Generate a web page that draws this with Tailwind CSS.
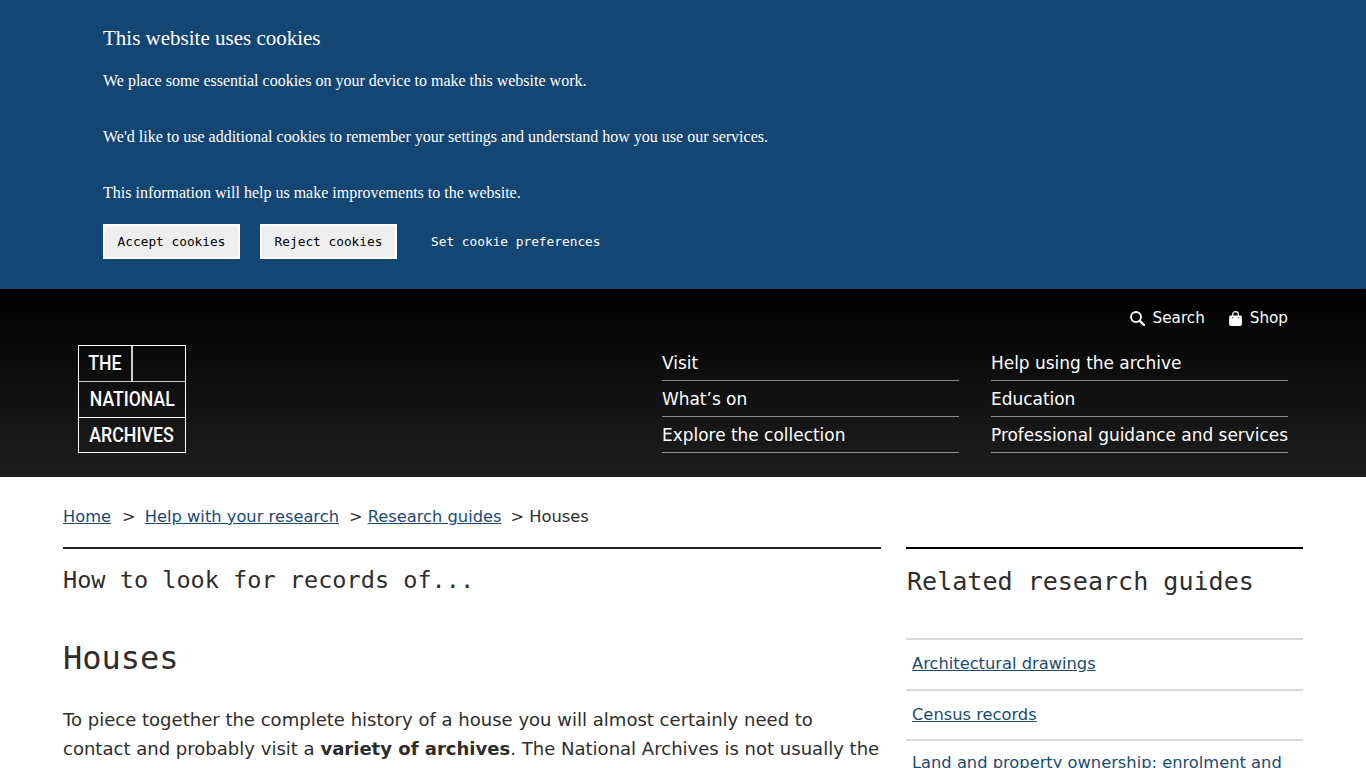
<!DOCTYPE html>
<html lang="en">
<head>
    <meta charset="UTF-8">
    <title>Houses - The National Archives</title>
    <script src="https://cdn.jsdelivr.net/npm/@tailwindcss/browser@4"></script>
</head>
<body class="h-[768px] overflow-hidden bg-white font-['DejaVu_Sans',sans-serif] text-[#2e2d2c]">

    <!-- Cookie banner -->
    <section class="h-[289px] bg-[#144673] pl-[103px] pt-[25px] text-white font-['Liberation_Serif',serif]">
        <h2 class="text-[21px] leading-[26px]">This website uses cookies</h2>
        <p class="mt-[18px] text-[16px] leading-[24px]">We place some essential cookies on your device to make this website work.</p>
        <p class="mt-[32px] text-[16px] leading-[24px]">We'd like to use additional cookies to remember your settings and understand how you use our services.</p>
        <p class="mt-[32px] text-[16px] leading-[24px]">This information will help us make improvements to the website.</p>
        <div class="mt-[19px] flex items-center font-['DejaVu_Sans_Mono',monospace] text-[12.8px]">
            <button class="h-[35px] w-[137px] border-2 border-white bg-[#eeeeee] text-black">Accept cookies</button>
            <button class="ml-[20px] h-[35px] w-[137px] border-2 border-white bg-[#eeeeee] text-black">Reject cookies</button>
            <a href="#" class="ml-[34px] text-white">Set cookie preferences</a>
        </div>
    </section>

    <!-- Header -->
    <header class="relative h-[188px] bg-linear-to-b/srgb from-black to-[#1e1e1e] text-white">
        <div class="flex justify-end gap-[24px] pr-[78px] pt-[19px] text-[15.2px] leading-[20px]">
            <a href="#" class="flex items-center gap-[8px]">
                <svg width="15" height="15" viewBox="0 0 15 15" fill="none" stroke="white"><circle cx="6" cy="6" r="5" stroke-width="1.8"/><path d="M9.8 9.8L14 14" stroke-width="2.4" stroke-linecap="round"/></svg>
                Search
            </a>
            <a href="#" class="flex items-center gap-[8px]">
                <svg width="13" height="15" viewBox="0 0 13 15"><path fill-rule="evenodd" d="M1.5 4.5H11.5Q12.6 4.5 12.7 5.6L13 12.8A2.2 2.2 0 0 1 10.8 15H2.2A2.2 2.2 0 0 1 0 12.8L0.3 5.6Q0.4 4.5 1.5 4.5ZM3.2 6.2V7.2H4.2V6.2ZM8.8 6.2V7.2H9.8V6.2Z" fill="white"/><path d="M3.7 5V3.2A2.8 2.6 0 0 1 9.3 3.2V5" fill="none" stroke="white" stroke-width="1.2"/></svg>
                Shop
            </a>
        </div>
        <div class="mt-[17px] flex pl-[78px]">
            <!-- Logo -->
            <a href="#" class="grid h-[108px] w-[108px] grid-cols-[54px_1fr] grid-rows-[36px_36px_1fr] border border-white text-[20px] font-medium font-['Roboto',sans-serif] leading-none">
                <span class="flex items-center justify-center border-r-2 border-b border-white/80 pb-[1px]"><span class="scale-x-[.88]">THE</span></span>
                <span class="border-b border-white/80"></span>
                <span class="col-span-2 flex items-center justify-center border-b border-white pb-[1px]"><span class="scale-x-[.88]">NATIONAL</span></span>
                <span class="col-span-2 flex items-center justify-center"><span class="scale-x-[.89]">ARCHIVES</span></span>
            </a>
            <nav class="ml-[476px] grid w-[626px] grid-cols-2 gap-x-[32px] text-[16.95px] leading-[24px]">
                <a href="#" class="h-[36px] border-b border-white/50 pt-[6px]">Visit</a>
                <a href="#" class="h-[36px] border-b border-white/50 pt-[6px]">Help using the archive</a>
                <a href="#" class="h-[36px] border-b border-white/50 pt-[6px]">What’s on</a>
                <a href="#" class="h-[36px] border-b border-white/50 pt-[6px]">Education</a>
                <a href="#" class="h-[36px] border-b border-white/50 pt-[6px]">Explore the collection</a>
                <a href="#" class="h-[36px] border-b border-white/50 pt-[6px] whitespace-nowrap">Professional guidance and services</a>
            </nav>
        </div>
    </header>

    <!-- Breadcrumb -->
    <div class="flex pl-[63px] pt-[28px] text-[16.3px] leading-[24px]">
        <a href="#" class="text-[#1b4b72] underline">Home</a>
        <span class="ml-[11px] mr-[9px]">&gt;</span>
        <a href="#" class="text-[#1b4b72] underline">Help with your research</a>
        <span class="ml-[10px] mr-[5px]">&gt;</span>
        <a href="#" class="text-[#1b4b72] underline">Research guides</a>
        <span class="ml-[9px] mr-[5px]">&gt;</span>
        <span>Houses</span>
    </div>

    <main class="mt-[18px] flex gap-[25px] px-[63px]">
        <article class="w-[818px] border-t-2 border-[#222222]">
            <p class="mt-[15px] font-['DejaVu_Sans_Mono',monospace] text-[23.55px] leading-[32px]">How to look for records of...</p>
            <h1 class="mt-[42px] font-['DejaVu_Sans_Mono',monospace] text-[32px] leading-[40px]">Houses</h1>
            <p class="mt-[27px] text-[18.05px] leading-[29px]">To piece together the complete history of a house you will almost certainly need to contact and probably visit a <strong>variety of archives</strong>. The National Archives is not usually the</p>
        </article>
        <aside class="w-[397px] border-t-2 border-black">
            <h2 class="mt-[15px] pl-px font-['DejaVu_Sans_Mono',monospace] text-[25.05px] leading-[36px]">Related research guides</h2>
            <ul class="mt-[38px] text-[16.3px] leading-[24px]">
                <li class="border-t-2 border-[#d9d9d9] pl-[6px] pt-[12px] pb-[13px]"><a href="#" class="text-[#1b4b72] underline">Architectural drawings</a></li>
                <li class="border-t-2 border-[#d9d9d9] pl-[6px] pt-[12px] pb-[12px]"><a href="#" class="text-[#1b4b72] underline">Census records</a></li>
                <li class="border-t-2 border-[#d9d9d9] pl-[6px] pt-[10px]"><a href="#" class="text-[#1b4b72] underline">Land and property ownership: enrolment and</a></li>
            </ul>
        </aside>
    </main>
</body>
</html>
